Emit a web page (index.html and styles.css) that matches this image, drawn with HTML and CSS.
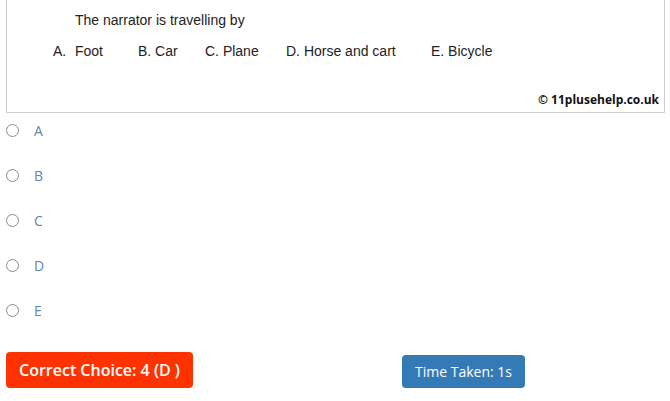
FILE: index.html
```html
<!DOCTYPE html>
<html>
<head>
<meta charset="utf-8">
<link rel="stylesheet" href="styles.css">
</head>
<body>
<div class="page">
  <div class="figure">
    <div class="question">The narrator is travelling by</div>
    <div class="options">
      <span class="opt opt-a"><span class="letter">A.</span>Foot</span>
      <span class="opt opt-b">B. Car</span>
      <span class="opt opt-c">C. Plane</span>
      <span class="opt opt-d">D. Horse and cart</span>
      <span class="opt opt-e">E. Bicycle</span>
    </div>
    <div class="copyright">© 11plusehelp.co.uk</div>
  </div>
  <div class="choices">
    <label class="choice"><span class="radio"></span><span class="label">A</span></label>
    <label class="choice"><span class="radio"></span><span class="label">B</span></label>
    <label class="choice"><span class="radio"></span><span class="label">C</span></label>
    <label class="choice"><span class="radio"></span><span class="label">D</span></label>
    <label class="choice"><span class="radio"></span><span class="label">E</span></label>
  </div>
  <div class="result">
    <div class="btn btn-correct">Correct Choice: 4 (D )</div>
    <div class="btn btn-time">Time Taken: 1s</div>
  </div>
</div>
</body>
</html>
```
FILE: styles.css
```css
html, body {
  margin: 0;
  padding: 0;
  background: #fff;
}
.page {
  padding: 0 5px 0 6px;
  font-family: "Open Sans", sans-serif;
}
.figure {
  margin-top: -20px;
  height: 133px;
  border: 1px solid #cfcfcf;
  box-sizing: border-box;
  display: flex;
  flex-direction: column;
  font-family: "Liberation Sans", Arial, sans-serif;
  color: #222;
  font-size: 14px;
}
.question {
  margin-top: 31px;
  padding-left: 68px;
  line-height: 16px;
}
.options {
  margin-top: 15px;
  display: flex;
  line-height: 16px;
  padding-left: 46px;
}
.opt { white-space: nowrap; }
.letter { display: inline-block; width: 22px; }
.opt-a { width: 85px; }
.opt-b { width: 67px; }
.opt-c { width: 81px; }
.opt-d { width: 145px; }
.copyright {
  margin-top: auto;
  margin-bottom: 4px;
  align-self: flex-end;
  padding-right: 5px;
  font-family: "Open Sans", sans-serif;
  font-weight: 700;
  font-size: 12px;
  line-height: 16px;
  color: #111;
}
.choices {
  display: flex;
  flex-direction: column;
  gap: 12px;
  padding-top: 1px;
}
.choice {
  display: flex;
  align-items: center;
  height: 33px;
}
.radio {
  width: 11px;
  height: 11px;
  border: 1px solid #8a8a8a;
  border-radius: 50%;
  box-sizing: content-box;
  background: #fff;
}
.label {
  margin-left: 15px;
  font-size: 14px;
  color: #6683ad;
}
.result {
  margin-top: 25px;
  display: grid;
  grid-template-columns: 396px auto;
  align-items: end;
}
.btn {
  color: #fff;
  border-radius: 4px;
  justify-self: start;
}
.btn-correct {
  background: #ff3300;
  font-size: 16px;
  font-weight: 600;
  height: 36px;
  line-height: 36px;
  padding: 0 13px;
}
.btn-time {
  background: #337ab7;
  font-size: 14px;
  height: 33px;
  line-height: 33px;
  padding: 0 13px;
}
```
